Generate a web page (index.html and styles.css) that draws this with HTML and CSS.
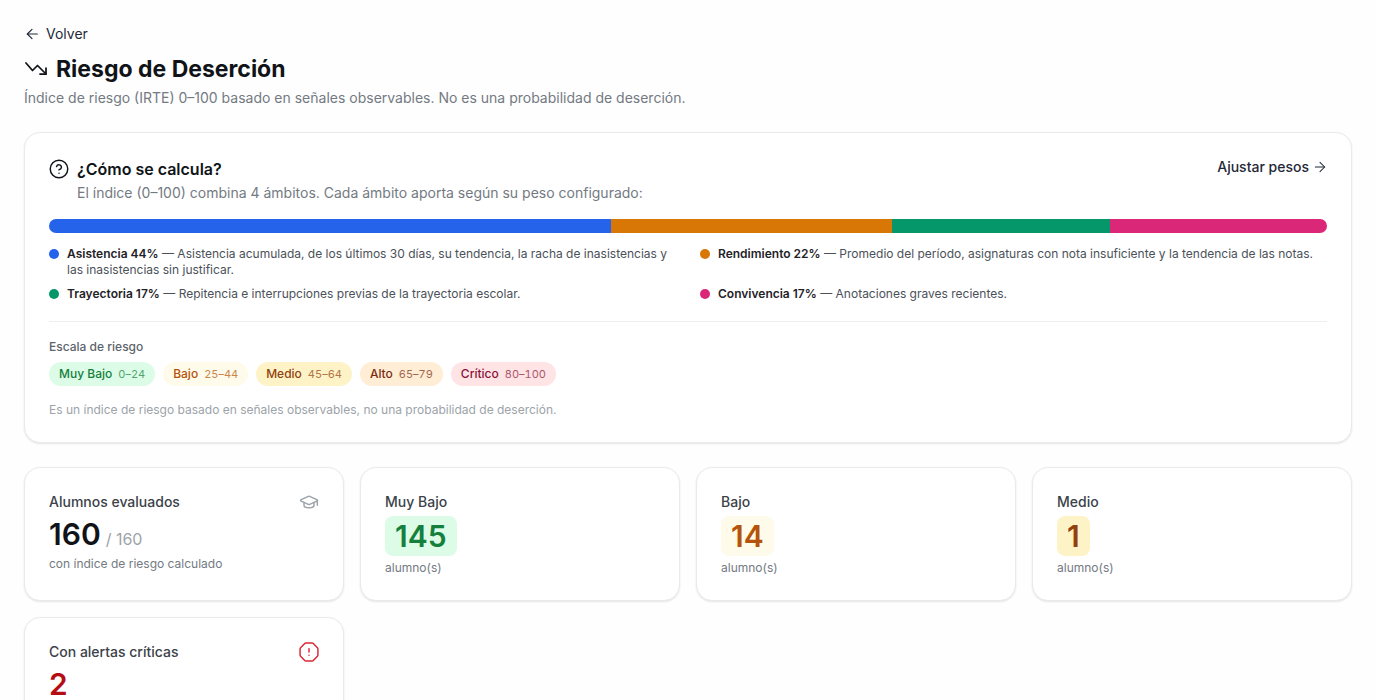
FILE: index.html
```html
<!DOCTYPE html>
<html lang="es">
<head>
<meta charset="utf-8">
<meta name="viewport" content="width=device-width, initial-scale=1">
<title>Riesgo de Deserción</title>
<link rel="stylesheet" href="styles.css">
</head>
<body>
<main class="page">
  <header class="page-header">
    <a class="back" href="#"><svg class="icon icon-sm" viewBox="0 0 24 24"><path d="m12 19-7-7 7-7"/><path d="M20 12H5"/></svg>Volver</a>
    <h1 class="title"><svg class="icon icon-lg" viewBox="0 0 24 24"><path d="M16 17h6v-6"/><path d="m22 17-8.500-8.500-5 5L2 6"/></svg>Riesgo de Deserción</h1>
    <p class="subtitle">Índice de riesgo (IRTE) 0–100 basado en señales observables. No es una probabilidad de deserción.</p>
  </header>

  <section class="card">
    <div class="card-head">
      <svg class="icon icon-md" viewBox="0 0 24 24"><circle cx="12" cy="12" r="10.500"/><path d="M9.090 9a3 3 0 0 1 5.830 1c0 2-3 3-3 3"/><path d="M12 17h.01"/></svg>
      <div class="card-heading">
        <h2 class="card-title">¿Cómo se calcula?</h2>
        <p class="card-text">El índice (0–100) combina 4 ámbitos. Cada ámbito aporta según su peso configurado:</p>
      </div>
      <a class="adjust" href="#">Ajustar pesos<svg class="icon icon-xs" viewBox="0 0 24 24"><path d="M4 12h16"/><path d="m12 4 8 8-8 8"/></svg></a>
    </div>
    <div class="bar">
      <div class="bg-blue" style="width:44%"></div>
      <div class="bg-amber" style="width:22%"></div>
      <div class="bg-green" style="width:17%"></div>
      <div class="bg-pink" style="width:17%"></div>
    </div>
    <ul class="legend">
      <li><span class="dot bg-blue"></span><p><strong>Asistencia 44%</strong> — Asistencia acumulada, de los últimos 30 días, su tendencia, la racha de inasistencias y las inasistencias sin justificar.</p></li>
      <li><span class="dot bg-amber"></span><p><strong>Rendimiento 22%</strong> — Promedio del período, asignaturas con nota insuficiente y la tendencia de las notas.</p></li>
      <li><span class="dot bg-green"></span><p><strong>Trayectoria 17%</strong> — Repitencia e interrupciones previas de la trayectoria escolar.</p></li>
      <li><span class="dot bg-pink"></span><p><strong>Convivencia 17%</strong> — Anotaciones graves recientes.</p></li>
    </ul>
    <div class="scale">
      <h3 class="scale-title">Escala de riesgo</h3>
      <div class="pills">
        <span class="pill very-low">Muy Bajo <span class="range">0–24</span></span>
        <span class="pill low">Bajo <span class="range">25–44</span></span>
        <span class="pill medium">Medio <span class="range">45–64</span></span>
        <span class="pill high">Alto <span class="range">65–79</span></span>
        <span class="pill critical">Crítico <span class="range">80–100</span></span>
      </div>
      <p class="note">Es un índice de riesgo basado en señales observables, no una probabilidad de deserción.</p>
    </div>
  </section>

  <section class="stats">
    <article class="card stat">
      <div class="stat-head"><h3 class="stat-label">Alumnos evaluados</h3><svg class="icon icon-md muted" viewBox="0 0 24 24"><path d="M21.420 10.922a1 1 0 0 0-.019-1.838L12.830 5.180a2 2 0 0 0-1.660 0L2.600 9.080a1 1 0 0 0 0 1.832l8.570 3.908a2 2 0 0 0 1.660 0z"/><path d="M22 10v6"/><path d="M6 12.500V16a6 3 0 0 0 12 0v-3.500"/></svg></div>
      <p class="value value-pair">160 <span class="total">/ 160</span></p>
      <p class="caption">con índice de riesgo calculado</p>
    </article>
    <article class="card stat">
      <h3 class="stat-label">Muy Bajo</h3>
      <p class="value chip very-low">145</p>
      <p class="caption">alumno(s)</p>
    </article>
    <article class="card stat">
      <h3 class="stat-label">Bajo</h3>
      <p class="value chip low">14</p>
      <p class="caption">alumno(s)</p>
    </article>
    <article class="card stat">
      <h3 class="stat-label">Medio</h3>
      <p class="value chip medium">1</p>
      <p class="caption">alumno(s)</p>
    </article>
    <article class="card stat">
      <div class="stat-head"><h3 class="stat-label">Con alertas críticas</h3><svg class="icon icon-md danger" viewBox="0 0 24 24"><path d="M12 16h.01"/><path d="M12 8v4"/><path d="M15.726 1.300a2 2 0 0 1 1.414.586l4.974 4.974A2 2 0 0 1 22.700 8.274v7.452a2 2 0 0 1-.586 1.414l-4.974 4.974a2 2 0 0 1-1.414.586H8.274a2 2 0 0 1-1.414-.586L1.886 17.140A2 2 0 0 1 1.300 15.726V8.274a2 2 0 0 1 .586-1.414L6.860 1.886A2 2 0 0 1 8.274 1.300z"/></svg></div>
      <p class="value alert">2</p>
      <p class="caption">alumno(s)</p>
    </article>
  </section>
</main>
</body>
</html>
```
FILE: styles.css
```css
* { box-sizing: border-box; }

html { scrollbar-width: none; }

body {
  margin: 0;
  background: #fefefe;
  color: #101418;
  font-family: Inter, "Liberation Sans", sans-serif;
  font-size: 14px;
  line-height: 20px;
}

h1, h2, h3, p, ul { margin: 0; padding: 0; }
a { color: #1f2937; font-weight: 500; text-decoration: none; }

.page { display: flex; flex-direction: column; gap: 24px; padding: 24px; }
.page-header { display: flex; flex-direction: column; align-items: flex-start; }

.icon { flex: none; fill: none; stroke: currentColor; stroke-width: 1.75; stroke-linecap: round; stroke-linejoin: round; }
.icon-xs { width: 14px; height: 14px; }
.icon-sm { width: 16px; height: 16px; }
.icon-md { width: 20px; height: 20px; }
.icon-lg { width: 24px; height: 24px; }

.back { display: flex; align-items: center; gap: 6px; font-weight: 400; }
.title { display: flex; align-items: center; gap: 8px; margin-top: 9px; font-size: 23px; line-height: 32px; font-weight: 700; }
.subtitle { margin-top: 3px; color: #737a82; }

.card {
  padding: 24px;
  border: 1px solid #e8eaec;
  border-radius: 16px;
  background: #fff;
  box-shadow: 0 1px 2px rgba(0, 0, 0, .1);
}

.card-head { display: flex; align-items: flex-start; gap: 8px; }
.card-head > .icon { margin-top: 2px; }
.card-heading { flex: 1; }
.card-title { font-size: 16px; line-height: 24px; font-weight: 600; }
.card-text { margin-top: 2px; color: #737a82; }
.adjust { display: flex; align-items: center; gap: 4px; }

.bar { display: flex; height: 14px; margin-top: 16px; overflow: hidden; border-radius: 7px; }
.bg-blue { background: #2563eb; }
.bg-amber { background: #d97706; }
.bg-green { background: #059669; }
.bg-pink { background: #db2777; }

.legend {
  display: grid;
  grid-template-columns: 1fr 1fr;
  gap: 8px 24px;
  margin-top: 13px;
  list-style: none;
  color: #4b5159;
  font-size: 12px;
  line-height: 16px;
}
.legend li { display: flex; gap: 8px; }
.legend strong { color: #1f2328; font-weight: 600; }
.dot { flex: none; width: 10px; height: 10px; margin-top: 3px; border-radius: 50%; }

.scale { margin-top: 19px; padding-top: 17px; border-top: 1px solid #eceef0; font-size: 12px; line-height: 16px; }
.scale-title { color: #5c636b; font-size: 12px; font-weight: 500; }
.pills { display: flex; flex-wrap: wrap; gap: 8px; margin-top: 7px; }
.pill { display: flex; align-items: center; gap: 6px; padding: 4px 10px; border-radius: 12px; font-weight: 500; }
.range { font-size: 11px; font-weight: 400; font-variant-numeric: tabular-nums; opacity: .7; }
.note { margin-top: 16px; color: #9ca3a9; }

.very-low { background: #dcfce7; color: #15803d; }
.low { background: #fffbeb; color: #b45309; }
.medium { background: #fef3c7; color: #92400e; }
.high { background: #ffedd5; color: #7c2d12; }
.critical { background: #ffe4e6; color: #881337; }

.stats { display: grid; grid-template-columns: repeat(4, 1fr); gap: 16px; }
.stat { display: flex; flex-direction: column; align-items: flex-start; gap: 4px; }
.stat-head { display: flex; align-items: center; justify-content: space-between; width: 100%; }
.stat-label { color: #3b4249; font-size: 14px; font-weight: 500; }
.value { font-size: 30px; line-height: 36px; font-weight: 600; }
.value-pair { display: flex; align-items: baseline; gap: 5px; }
.total { color: #9ca3a9; font-size: 16px; line-height: 20px; font-weight: 400; }
.chip { padding: 2px 10px; border-radius: 8px; }
.alert { color: #b40e14; }
.caption { color: #737a82; font-size: 12px; line-height: 16px; }
.muted { color: #9ca3a9; }
.danger { color: #dc2637; }
```
